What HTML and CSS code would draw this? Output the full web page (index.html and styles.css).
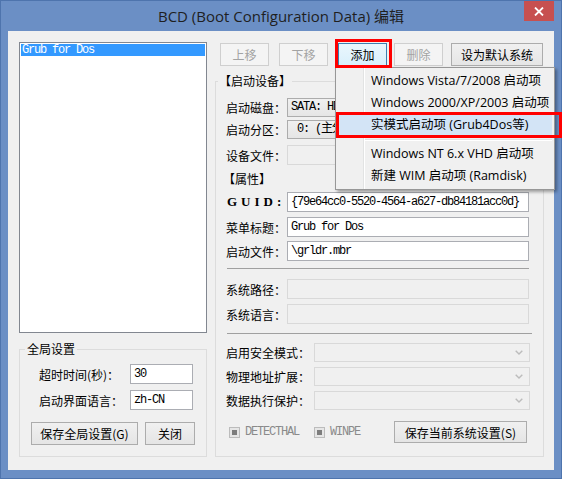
FILE: index.html
```html
<!DOCTYPE html>
<html lang="zh-CN">
<head>
<meta charset="utf-8">
<title>BCD 编辑</title>
<link rel="stylesheet" href="styles.css">
</head>
<body>
<div class="window">
  <div class="titlebar">
    <div class="tb-spacer"></div>
    <div class="title">BCD (Boot Configuration Data) 编辑</div>
    <div class="close"><svg width="10" height="9" viewBox="0 0 10 9"><path d="M1 0.5 L9 8.5 M9 0.5 L1 8.5" stroke="#fff" stroke-width="1.8" fill="none"/></svg></div>
  </div>
  <div class="client">
    <div class="leftcol">
      <div class="listbox">
        <div class="li sel">Grub for Dos</div>
      </div>
      <fieldset class="group global">
        <legend>全局设置</legend>
        <div class="grow"><span class="glabel">超时时间(秒)：</span><div class="tbox mono">30</div></div>
        <div class="grow"><span class="glabel">启动界面语言：</span><div class="tbox mono">zh-CN</div></div>
        <div class="gbtns"><div class="btn w107">保存全局设置(G)</div><div class="btn w50">关闭</div></div>
      </fieldset>
    </div>
    <div class="rightcol">
      <div class="toolbar">
        <div class="btn tbb dis">上移</div>
        <div class="btn tbb dis g10">下移</div>
        <div class="btn tbb focus g10">添加</div>
        <div class="btn tbb dis g7">删除</div>
        <div class="btn tbdef g8">设为默认系统</div>
      </div>
      <fieldset class="group main">
        <legend>【启动设备】</legend>
        <div class="frow r1"><span class="flabel">启动磁盘：</span><div class="combo mono">SATA: HD0</div></div>
        <div class="frow r2"><span class="flabel">启动分区：</span><div class="combo mono"> 0: (主分区)</div></div>
        <div class="frow r3"><span class="flabel">设备文件：</span><div class="tbox wide disabled"></div></div>
        <div class="sect">【属性】</div>
        <div class="frow r4"><span class="flabel guid">GUID:</span><div class="tbox wide mono">{79e64cc0-5520-4564-a627-db84181acc0d}</div></div>
        <div class="frow r5"><span class="flabel">菜单标题：</span><div class="tbox wide mono">Grub for Dos</div></div>
        <div class="frow r6"><span class="flabel">启动文件：</span><div class="tbox wide mono">\grldr.mbr</div></div>
        <div class="hsep s1"></div>
        <div class="frow r7"><span class="flabel">系统路径：</span><div class="tbox wide disabled"></div></div>
        <div class="frow r8"><span class="flabel">系统语言：</span><div class="tbox wide disabled"></div></div>
        <div class="hsep s2"></div>
        <div class="frow r9"><span class="flabel long">启用安全模式：</span><div class="dcombo"><svg width="8" height="5" viewBox="0 0 8 5"><path d="M0.7 0.7 L4 4 L7.3 0.7" stroke="#bcbcbc" stroke-width="1.4" fill="none"/></svg></div></div>
        <div class="frow r10"><span class="flabel long">物理地址扩展：</span><div class="dcombo"><svg width="8" height="5" viewBox="0 0 8 5"><path d="M0.7 0.7 L4 4 L7.3 0.7" stroke="#bcbcbc" stroke-width="1.4" fill="none"/></svg></div></div>
        <div class="frow r11"><span class="flabel long">数据执行保护：</span><div class="dcombo"><svg width="8" height="5" viewBox="0 0 8 5"><path d="M0.7 0.7 L4 4 L7.3 0.7" stroke="#bcbcbc" stroke-width="1.4" fill="none"/></svg></div></div>
        <div class="brow">
          <div class="chk c1"><span class="cbox"><span class="cfill"></span></span><span class="ctxt">DETECTHAL</span></div>
          <div class="chk c2"><span class="cbox"><span class="cfill"></span></span><span class="ctxt">WINPE</span></div>
          <div class="btn savesys">保存当前系统设置(S)</div>
        </div>
      </fieldset>
    </div>
  </div>
  <div class="menu">
    <div class="mi">Windows Vista/7/2008 启动项</div>
    <div class="mi">Windows 2000/XP/2003 启动项</div>
    <div class="mi hl">实模式启动项 (Grub4Dos等)</div>
    <div class="msep"></div>
    <div class="mi">Windows NT 6.x VHD 启动项</div>
    <div class="mi">新建 WIM 启动项 (Ramdisk)</div>
  </div>
  <div class="mark m1"></div>
  <div class="mark m2"></div>
</div>
</body>
</html>
```
FILE: styles.css
```css
* { box-sizing: border-box; }
html, body { margin: 0; padding: 0; }
body {
  width: 562px;
  height: 479px;
  overflow: hidden;
  font-family: "Noto Sans CJK SC", "Noto Sans", sans-serif;
  font-size: 12px;
  color: #000;
}
.window {
  position: relative;
  width: 562px;
  height: 479px;
  background: #6b8fc5;
  border: 1px solid #4e74ad;
  display: flex;
  flex-direction: column;
}
.titlebar {
  height: 30px;
  display: grid;
  grid-template-columns: 1fr auto 1fr;
  align-items: start;
}
.title {
  font-family: "Open Sans", "Noto Sans CJK SC", sans-serif;
  font-size: 15px;
  line-height: 30px;
  color: #1f1f1f;
  white-space: nowrap;
}
.close {
  justify-self: end;
  margin-right: 7px;
  width: 30px;
  height: 20px;
  background: #c75050;
  display: flex;
  align-items: center;
  justify-content: center;
}
.client {
  margin: 0 7px 8px 7px;
  height: 439px;
  background: #f0f0f0;
  display: grid;
  grid-template-columns: 188px 329px;
  column-gap: 8px;
  padding: 11px 10px 0 11px;
  align-items: start;
}
.mono {
  font-family: "Liberation Mono", "Noto Sans CJK SC", monospace;
  font-size: 12px;
  letter-spacing: -1.2px;
}
/* left column */
.leftcol { display: flex; flex-direction: column; }
.listbox {
  height: 291px;
  border: 1px solid #828790;
  background: #fff;
  padding: 1px;
}
.li {
  height: 12px;
  line-height: 12px;
  padding-left: 1px;
  font-family: "Liberation Mono", monospace;
  font-size: 12px;
  letter-spacing: -1.2px;
  white-space: pre;
}
.li.sel { background: #3399ff; color: #fff; }
.group {
  margin: 0;
  border: 1px solid #dcdcdc;
  min-width: 0;
}
.group legend {
  font-size: 12px;
  line-height: 14px;
  padding: 0 2px;
}
.global {
  margin-top: 9px;
  padding: 8px 0 11px 0;
}
.global legend { margin-left: 5px; }
.grow {
  display: flex;
  align-items: center;
  height: 20px;
  padding-left: 19px;
}
.grow + .grow { margin-top: 6px; }
.glabel { width: 91px; white-space: nowrap; }
.tbox {
  height: 20px;
  width: 63px;
  border: 1px solid #abadb3;
  background: #fff;
  padding-left: 3px;
  line-height: 18px;
  white-space: pre;
  overflow: hidden;
}
.tbox.wide { width: 242px; }
.tbox.disabled { border-color: #d9d9d9; background: #f0f0f0; }
.gbtns {
  display: flex;
  gap: 7px;
  margin-top: 12px;
  padding-left: 11px;
}
.btn {
  height: 23px;
  border: 1px solid #acacac;
  background: linear-gradient(#f0f0f0, #e5e5e5);
  display: flex;
  align-items: center;
  justify-content: center;
  white-space: nowrap;
  font-size: 12px;
}
.w107 { width: 107px; }
.w50 { width: 50px; }
/* right column */
.rightcol { display: flex; flex-direction: column; }
.toolbar {
  display: flex;
  margin-top: 1px;
  padding-left: 5px;
}
.tbb { width: 49px; }
.tbdef { width: 92px; }
.g10 { margin-left: 10px; }
.g7 { margin-left: 7px; }
.g8 { margin-left: 8px; }
.btn.dis { color: #a3a3a3; border-color: #cfcfcf; background: #f4f4f4; }
.btn.focus { border-color: #3c7fb1; background: linear-gradient(#eaf6fd, #d9f0fc); }
.main {
  margin-top: 8px;
  padding: 0 0 13px 0;
}
.main legend { margin-left: 2px; padding: 0 1px; }
.frow {
  display: flex;
  align-items: center;
  padding-left: 10px;
}
.flabel { width: 61px; white-space: nowrap; }
.flabel.long { width: 88px; }
.flabel.guid {
  font-family: "Liberation Serif", serif;
  font-weight: bold;
  font-size: 13px;
  letter-spacing: 4px;
  padding-left: 1px;
}
.combo {
  width: 242px;
  height: 19px;
  border: 1px solid #acacac;
  background: linear-gradient(#f0f0f0, #e5e5e5);
  padding-left: 3px;
  line-height: 17px;
  white-space: pre;
  overflow: hidden;
}
.dcombo {
  width: 216px;
  height: 19px;
  border: 1px solid #d9d9d9;
  background: #f0f0f0;
  display: flex;
  align-items: center;
  justify-content: flex-end;
  padding-right: 6px;
}
.r1 { margin-top: 10px; }
.r2 { margin-top: 3px; }
.r3 { margin-top: 6px; }
.sect {
  margin-top: 7px;
  padding-left: 7px;
  line-height: 14px;
  height: 14px;
}
.r4 { margin-top: 6px; }
.r5 { margin-top: 5px; }
.r6 { margin-top: 4px; }
.hsep {
  height: 1px;
  background: #a0a0a0;
  margin-left: 11px;
}
.s1 { margin-top: 7px; width: 302px; }
.r7 { margin-top: 10px; }
.r8 { margin-top: 5px; }
.s2 { margin-top: 9px; width: 305px; }
.r9 { margin-top: 9px; }
.r10, .r11 { margin-top: 5px; }
.brow {
  display: flex;
  align-items: center;
  margin-top: 11px;
  padding-left: 13px;
  padding-right: 16px;
}
.chk { display: flex; align-items: center; }
.c1 { width: 85px; }
.cbox {
  width: 11px;
  height: 11px;
  border: 1px solid #bcbcbc;
  background: #e6e6e6;
  display: flex;
  align-items: center;
  justify-content: center;
}
.cfill { width: 5px; height: 5px; background: #7d7d7d; }
.ctxt {
  margin-left: 5px;
  font-family: "Liberation Mono", monospace;
  font-size: 12px;
  letter-spacing: -1.2px;
  color: #8a8a8a;
}
.savesys { margin-left: auto; width: 133px; height: 22px; }
/* popup menu */
.menu {
  position: absolute;
  left: 334px;
  top: 66px;
  width: 220px;
  border: 1px solid #979797;
  padding: 2px;
  background:
    linear-gradient(to right, transparent 27px, #e2e3e3 27px, #e2e3e3 28px, #fff 28px, #fff 29px, transparent 29px),
    #f0f0f0;
  box-shadow: 2px 2px 3px rgba(0,0,0,0.35);
}
.mi {
  height: 22px;
  line-height: 22px;
  padding-left: 33px;
  font-family: "Open Sans", "Noto Sans CJK SC", sans-serif;
  font-size: 12.5px;
  white-space: nowrap;
}
.mi.hl { background: #d3e4f6; }
.msep {
  height: 7px;
  margin-left: 27px;
  background: linear-gradient(to bottom, transparent 3px, #e2e3e3 3px, #e2e3e3 4px, #fff 4px, #fff 5px, transparent 5px);
}
.mark {
  position: absolute;
  border: 3px solid #ff0000;
}
.m1 { left: 334px; top: 38px; width: 57px; height: 29px; }
.m2 { left: 335px; top: 111px; width: 226px; height: 26px; }
```
